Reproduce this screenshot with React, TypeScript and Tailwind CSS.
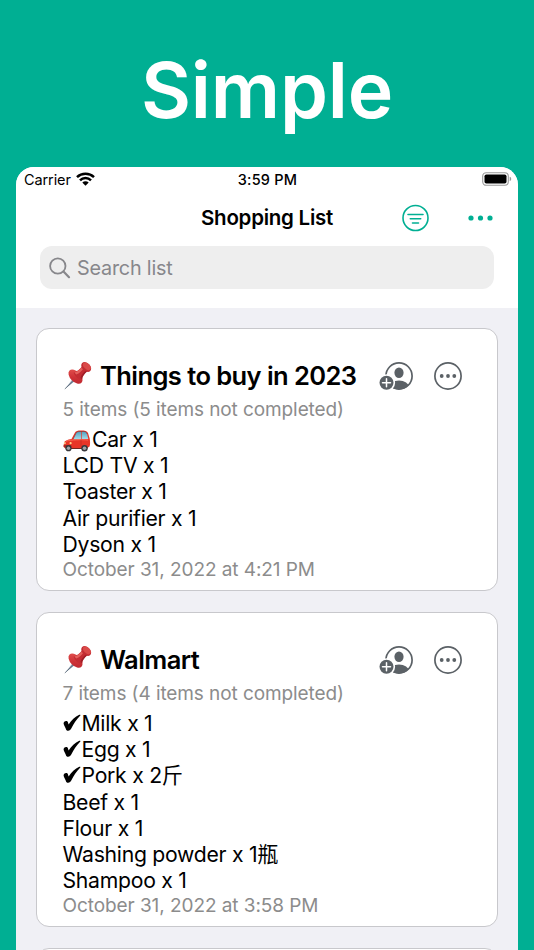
import React from "react";

function Pin() {
  return (
    <svg className="h-7 w-7 shrink-0" viewBox="0 0 28 28" fill="none">
      <defs>
        <linearGradient id="pinRed" x1="6" y1="8" x2="19" y2="21" gradientUnits="userSpaceOnUse">
          <stop stopColor="#e25350" />
          <stop offset="0.5" stopColor="#cf3237" />
          <stop offset="1" stopColor="#b8262d" />
        </linearGradient>
      </defs>
      <path d="M.8 27 9 16.800l2.200 2Z" fill="#8b9cae" />
      <path d="M.8 27 10.800 17.600" stroke="#4e5c6b" strokeWidth=".7" />
      <ellipse cx="11.500" cy="14.600" rx="8.600" ry="5.200" transform="rotate(46 11.500 14.600)" fill="url(#pinRed)" />
      <path d="M9.800 10.200c3-.3 6.200-2.800 8.600-6.200l5.200 5c-3.200 2.600-5.400 5.600-5.600 8.700-3.200.4-8.400-4-8.200-7.500Z" fill="#c42d33" />
      <path d="M10.300 10.400c3-.5 5.800-2.700 8.100-5.600l1.400 1.300c-2.200 3.200-4.300 5.200-7.500 6.500Z" fill="#e4605c" />
      <path d="M16.500 15.800c.9-2.800 2.700-5 5.200-7l1.500.4c-3 2.600-5 5.200-5.300 8Z" fill="#9f1f28" />
      <ellipse cx="22.200" cy="5" rx="5.700" ry="4" transform="rotate(45 22.200 5)" fill="#c22d33" />
      <ellipse cx="22.900" cy="4.300" rx="4.700" ry="2.900" transform="rotate(45 22.900 4.300)" fill="#da4a49" />
    </svg>
  );
}

function Car() {
  return (
    <svg className="mr-[1.5px] mt-[3px] h-[22px] w-[28px] shrink-0" viewBox="0 0 28 22">
      <defs>
        <linearGradient id="glass" x1="0" y1="0" x2="0" y2="1">
          <stop stopColor="#4f9fbe" />
          <stop offset="1" stopColor="#a5dbe9" />
        </linearGradient>
      </defs>
      <rect x="2" y="14" width="23" height="5" rx="2" fill="#4d2220" />
      <path d="M1 13c.3-2 3.500-3.400 7.500-4L12 2.600C13 1 14.500.5 18 .5c4 0 6 .5 7 2.500l1.700 5.600c.4 2.300.7 6.200-.1 8-1 1.200-4 1.600-9 1.600H5c-3 0-4.300-.6-4.400-2.500Z" fill="#e83527" />
      <path d="M10 9.300 12.800 3.500c.8-1.500 2-2 4-2h1.200v7.800Z" fill="url(#glass)" />
      <path d="M18.700 1.500h2.100c2 0 2.800.8 3.300 2.500L25.300 9h-6.600Z" fill="url(#glass)" />
      <path d="M10 9.300 12.800 3.500c.8-1.500 2-2 4-2h4c2 0 2.800.8 3.300 2.500" fill="none" stroke="#8e2c2a" strokeWidth=".6" />
      <path d="M3 11.200c5-1.500 15-1.800 22-1.200" stroke="#ff7560" strokeWidth=".8" fill="none" />
      <path d="M18 9.500v7" stroke="#b3251c" strokeWidth=".5" />
      <rect x=".5" y="15" width="8" height="2.400" rx="1.100" fill="#a72720" />
      <ellipse cx="1.900" cy="13.200" rx=".8" ry="1.100" fill="#ffe3a0" />
      <circle cx="7.600" cy="13.200" r="1.100" fill="#ffd488" />
      <circle cx="5.500" cy="18.200" r="3.100" fill="#37373b" />
      <circle cx="5.500" cy="18.200" r="1.700" fill="#a0a4a8" />
      <circle cx="21.500" cy="18.200" r="3.200" fill="#37373b" />
      <circle cx="21.500" cy="18.200" r="1.800" fill="#a0a4a8" />
    </svg>
  );
}

function Check() {
  return (
    <svg className="h-[18px] w-[19px] shrink-0" viewBox="0 0 19 18">
      <path d="M.6 9.700C.3 8 2.300 6.500 3.900 7.100c1 .4 1.200 1.900 1.700 3.300C8.300 6.500 12 2.800 16.300.8c.9-.4 1.500.3.8 1-3.800 3.900-6.500 7.900-8.700 12.500-.8 1.700-1.700 2.400-3.300 2.400-1.300 0-1.900-.5-2.300-2C2.200 12.800 1 11.500.6 9.700Z" fill="#000" />
    </svg>
  );
}

function AddPerson() {
  return (
    <svg className="h-[30px] w-[36px]" viewBox="0 0 36 30">
      <defs>
        <clipPath id="personDisc"><circle cx="21" cy="15" r="13.500" /></clipPath>
      </defs>
      <circle cx="21" cy="15" r="13.100" fill="none" stroke="#5b6166" strokeWidth="1.700" />
      <ellipse cx="21" cy="11.700" rx="4.600" ry="5.200" fill="#5b6166" />
      <ellipse cx="21" cy="26.200" rx="10" ry="6.600" fill="#5b6166" clipPath="url(#personDisc)" />
      <circle cx="8.500" cy="21.800" r="8.600" fill="#fff" />
      <circle cx="8.500" cy="21.800" r="7" fill="#5b6166" />
      <path d="M8.500 17.800v8M4.500 21.800h8" stroke="#fff" strokeWidth="1.500" strokeLinecap="round" />
    </svg>
  );
}

function More() {
  return (
    <svg className="h-[30px] w-[30px]" viewBox="0 0 30 30">
      <circle cx="15" cy="15" r="13.100" fill="none" stroke="#5b6166" strokeWidth="1.700" />
      <g fill="#5b6166">
        <circle cx="8.700" cy="15" r="1.900" />
        <circle cx="15" cy="15" r="1.900" />
        <circle cx="21.300" cy="15" r="1.900" />
      </g>
    </svg>
  );
}

type Item = { text: string; icon?: "car" | "check" };

function Card({ title, sub, items, date }: { title: string; sub: string; items: Item[]; date: string }) {
  return (
    <section className="w-[462px] shrink-0 rounded-[13px] border border-[#c8c8cc] bg-white pl-[25.5px] pt-[30px] pb-[10px]">
      <div className="flex h-[34px] items-center">
        <div className="flex w-[315.5px] items-center gap-[8px] pl-[1.5px]">
          <Pin />
          <h2 className="text-[25.5px] font-semibold leading-[34px] tracking-[-0.56px]">{title}</h2>
        </div>
        <div className="flex items-center gap-[19px]">
          <AddPerson />
          <More />
        </div>
      </div>
      <p className="h-[33px] text-[19px] leading-[34px] tracking-[-0.09px] text-[#8c8c8c]">{sub}</p>
      <ul>
        {items.map((it) => (
          <li key={it.text} className="flex h-[26.2px] items-center text-[21.2px] leading-[26px] tracking-[-0.27px]">
            {it.icon === "car" && <Car />}
            {it.icon === "check" && <Check />}
            <span>{it.text}</span>
          </li>
        ))}
      </ul>
      <p className="h-[23px] text-[19px] leading-[25px] tracking-[-0.07px] text-[#8c8c8c]">{date}</p>
    </section>
  );
}

export default function App() {
  return (
    <main className="flex h-[950px] w-[534px] flex-col overflow-hidden whitespace-nowrap bg-[#00af93] font-['Inter','Noto_Sans_CJK_SC',sans-serif] text-black">
      <h1 className="h-[167px] shrink-0 pt-[42px] text-center text-[77px] font-semibold leading-[96px] tracking-[-0.2px] text-white">Simple</h1>
      <div className="mx-4 flex min-h-0 w-[502px] flex-1 flex-col overflow-hidden rounded-t-[18px] bg-[#f0f0f5]">
        <header className="h-[141px] shrink-0 bg-white">
          <div className="grid h-[25px] grid-cols-3 items-center pl-2 pr-[6px] text-[14.5px]">
            <div className="flex items-center gap-[5px] tracking-[-0.1px]">
              <span>Carrier</span>
              <svg className="-mt-[2px] h-[14px] w-[19px]" viewBox="0 0 19 14" fill="none" stroke="#000" strokeWidth="2.500">
                <path d="M1 5.200c4.700-4.500 12.300-4.500 17 0M4 8.300c3-3 8-3 11 0" />
                <path d="M6.300 10.500c1.800-1.700 4.600-1.700 6.400 0L9.500 13.700Z" fill="#000" stroke="none" />
              </svg>
            </div>
            <div className="pr-px text-center font-medium tracking-[0.2px]">3:59 PM</div>
            <svg className="-mt-px h-[14px] w-[30px] justify-self-end" viewBox="0 0 30 14">
              <rect x=".7" y=".7" width="25.600" height="12.600" rx="3.500" fill="none" stroke="#999" strokeWidth="1.100" />
              <rect x="2.500" y="2.500" width="22" height="9" rx="1.800" />
              <path d="M27.700 4.800c2 .6 2 3.800 0 4.400Z" fill="#999" />
            </svg>
          </div>
          <div className="flex h-[52px] items-center">
            <div className="w-[185px]" />
            <div className="w-[200px] text-[20.5px] font-semibold tracking-[-0.25px]">Shopping List</div>
            <svg className="h-[28px] w-[28px]" viewBox="0 0 28 28" fill="none" stroke="#00af93" strokeWidth="1.600" strokeLinecap="round">
              <circle cx="14.500" cy="14" r="12.500" />
              <path d="M7 10.500h15M9.300 14.700h10.400M11.500 19h6" />
            </svg>
            <svg className="ml-[38px] h-[8px] w-[27px]" viewBox="0 0 27 8" fill="#00af93">
              <circle cx="4" cy="4" r="2.600" />
              <circle cx="13.500" cy="4" r="2.600" />
              <circle cx="23" cy="4" r="2.600" />
            </svg>
          </div>
          <div className="ml-6 mt-[2px] flex h-[43px] w-[454px] items-center rounded-[12px] bg-[#eeeeee] pl-[9px] text-[#87878b]">
            <svg className="h-[22px] w-[22px]" viewBox="0 0 22 22" fill="none" stroke="currentColor" strokeWidth="1.800" strokeLinecap="round">
              <circle cx="8.800" cy="9" r="7.700" />
              <path d="m14.500 14.500 5.500 5.700" strokeWidth="2.200" />
            </svg>
            <span className="ml-[6px] pt-[2px] text-[19.8px] tracking-[-0.2px]">Search list</span>
          </div>
        </header>
        <div className="flex flex-col items-start gap-[21px] pl-5 pt-5">
          <Card
            title="Things to buy in 2023"
            sub="5 items (5 items not completed)"
            items={[
              { text: "Car x 1", icon: "car" },
              { text: "LCD TV x 1" },
              { text: "Toaster x 1" },
              { text: "Air purifier x 1" },
              { text: "Dyson x 1" },
            ]}
            date="October 31, 2022 at 4:21 PM"
          />
          <Card
            title="Walmart"
            sub="7 items (4 items not completed)"
            items={[
              { text: "Milk x 1", icon: "check" },
              { text: "Egg x 1", icon: "check" },
              { text: "Pork x 2斤", icon: "check" },
              { text: "Beef x 1" },
              { text: "Flour x 1" },
              { text: "Washing powder x 1瓶" },
              { text: "Shampoo x 1" },
            ]}
            date="October 31, 2022 at 3:58 PM"
          />
          <section className="h-[60px] w-[462px] shrink-0 rounded-[13px] border border-[#c8c8cc] bg-white" />
        </div>
      </div>
    </main>
  );
}
